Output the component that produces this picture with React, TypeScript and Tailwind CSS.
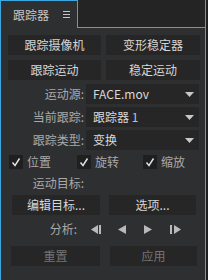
import React from "react";

const font = { fontFamily: '"Noto Sans CJK SC", "Noto Sans", sans-serif' };

function Btn({ children, className = "", dim = false }: { children: React.ReactNode; className?: string; dim?: boolean }) {
  return (
    <div
      className={`h-[20px] bg-[#262627] flex items-center justify-center text-[12px] leading-none ${dim ? "text-[#747474]" : "text-[#d6d6d6]"} ${className}`}
    >
      {children}
    </div>
  );
}

function Select({ children }: { children: React.ReactNode }) {
  return (
    <div className="w-[113px] h-[20px] bg-[#262627] flex items-center pl-[7px] pr-[5px] text-[12px] leading-none text-[#d8d8d8]">
      <span className="flex-1">{children}</span>
      <svg width="9" height="5" viewBox="0 0 9 5">
        <path d="M0 0H9L4.5 5Z" fill="#c8c8c8" />
      </svg>
    </div>
  );
}

function Row({ label, children }: { label: string; children: React.ReactNode }) {
  return (
    <div className="flex items-center h-[20px]">
      <div className="w-[76px] text-right text-[12px] leading-none text-[#a9a9a9]">{label}</div>
      <div className="ml-[2px]">{children}</div>
    </div>
  );
}

function Check({ label, className = "" }: { label: string; className?: string }) {
  return (
    <div className={`flex items-center h-[14px] ${className}`}>
      <div className="w-[14px] h-[14px] bg-[#1f1f20] flex items-center justify-center">
        <svg width="10" height="10" viewBox="0 0 10 10">
          <path d="M1.5 5.5L4 8.5L8.5 1.5" stroke="#e4e4e4" strokeWidth="1.4" fill="none" />
        </svg>
      </div>
      <span className="ml-[4px] text-[12px] leading-none text-[#a9a9a9]">{label}</span>
    </div>
  );
}

export default function App() {
  return (
    <div className="w-[208px] h-[280px] bg-[#1f1f20] flex flex-col overflow-hidden" style={font}>
      {/* 标签栏 */}
      <div className="flex h-[28px] w-[206px]">
        <div className="w-[78px] h-[28px] border-l border-t border-r border-[#3ba7e1] bg-[#2e2f31] flex items-center pl-[12px] text-[12px] text-[#c6c6c6]">
          <span className="leading-none">跟踪器</span>
          <svg className="ml-[14px]" width="7" height="7" viewBox="0 0 7 7">
            <path d="M0 0.5H7M0 3.5H7M0 6.5H7" stroke="#c6c6c6" strokeWidth="1" />
          </svg>
        </div>
        <div className="flex-1 border-b border-r border-[#3ba7e1] bg-[#242425]" />
      </div>

      {/* 面板 */}
      <div className="w-[206px] flex-1 bg-[#2e2f31] border-l border-r border-[#3ba7e1] pl-[7px] pt-[7px] flex flex-col">
        <div className="flex gap-[5px]">
          <Btn className="w-[93px]">跟踪摄像机</Btn>
          <Btn className="w-[94px]">变形稳定器</Btn>
        </div>
        <div className="flex gap-[5px] mt-[5px]">
          <Btn className="w-[93px]">跟踪运动</Btn>
          <Btn className="w-[94px]">稳定运动</Btn>
        </div>

        <div className="mt-[4px]">
          <Row label="运动源:">
            <Select>FACE.mov</Select>
          </Row>
        </div>
        <div className="mt-[3px]">
          <Row label="当前跟踪:">
            <Select>
              跟踪器 <span className="text-[#9cc8f2]">1</span>
            </Select>
          </Row>
        </div>
        <div className="mt-[3px]">
          <Row label="跟踪类型:">
            <Select>变换</Select>
          </Row>
        </div>

        <div className="flex mt-[5px] pl-[1px]">
          <Check label="位置" className="w-[68px]" />
          <Check label="旋转" className="w-[66px]" />
          <Check label="缩放" />
        </div>

        <div className="flex h-[14px] items-center mt-[7px]">
          <div className="w-[76px] text-right text-[12px] leading-none text-[#a9a9a9]">运动目标:</div>
        </div>

        <div className="flex mt-[5px] pl-[4px] gap-[9px]">
          <Btn className="w-[88px]">编辑目标...</Btn>
          <Btn className="w-[87px]">选项...</Btn>
        </div>

        <div className="flex items-center h-[14px] mt-[7px]">
          <div className="w-[69px] text-right text-[12px] leading-none text-[#a9a9a9]">分析:</div>
          <div className="flex items-center ml-[14px]">
            <svg width="11" height="9" viewBox="0 0 11 9">
              <path d="M0 4.5L7 0V9Z" fill="#b9b9b9" />
              <rect x="8" y="0" width="2" height="9" fill="#b9b9b9" />
            </svg>
            <svg className="ml-[16px]" width="8" height="9" viewBox="0 0 8 9">
              <path d="M0 4.5L8 0V9Z" fill="#b9b9b9" />
            </svg>
            <svg className="ml-[18px]" width="8" height="9" viewBox="0 0 8 9">
              <path d="M8 4.5L0 0V9Z" fill="#b9b9b9" />
            </svg>
            <svg className="ml-[18px]" width="11" height="9" viewBox="0 0 11 9">
              <rect x="0" y="0" width="2" height="9" fill="#b9b9b9" />
              <path d="M11 4.5L4 0V9Z" fill="#b9b9b9" />
            </svg>
          </div>
        </div>

        <div className="flex mt-[10px] pl-[3px] gap-[10px]">
          <Btn className="w-[89px]" dim>重置</Btn>
          <Btn className="w-[87px]" dim>应用</Btn>
        </div>
      </div>
    </div>
  );
}
